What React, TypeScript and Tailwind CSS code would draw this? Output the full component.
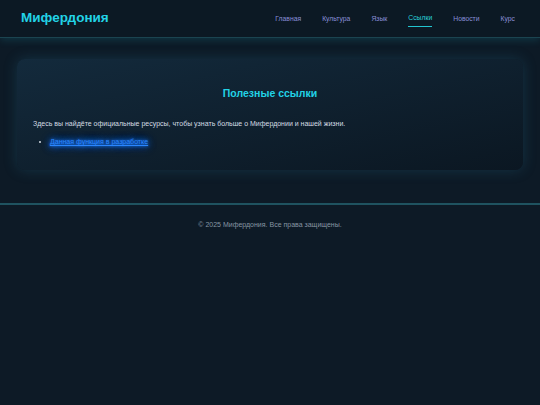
const navLinks = ["Главная", "Культура", "Язык", "Ссылки", "Новости", "Курс"];

export default function App() {
  return (
    <div
      className="min-h-[405px] bg-[#0d1a26] text-[#c9d4dc]"
      style={{ fontFamily: '"Liberation Sans", Arial, sans-serif' }}
    >
      {/* Header */}
      <header className="flex h-[38px] items-center justify-between border-b border-[#1b4450] bg-[#0c1924] pl-[21px] pr-[25px] shadow-[0_2px_8px_rgba(34,190,210,0.18)]">
        <h1 className="text-[13.5px] font-bold text-[#22d3e6]">Мифердония</h1>
        <nav className="flex items-center gap-[21px] text-[6.8px]">
          {navLinks.map((link) => (
            <span
              key={link}
              className={
                link === "Ссылки"
                  ? "border-b border-[#22c5d0] pb-[2px] pt-[3px] text-[#2ad0da]"
                  : "pb-[2px] pt-[3px] text-[#8a8fd8]"
              }
            >
              {link}
            </span>
          ))}
        </nav>
      </header>

      {/* Main card */}
      <main className="px-[17px] pt-[21px]">
        <section className="h-[111px] rounded-[8px] bg-gradient-to-br from-[#132a3c] to-[#0b1722] px-[16px] pt-[27px] shadow-[0_0_14px_rgba(40,120,150,0.28)]">
          <h2 className="text-center text-[10.5px] font-bold text-[#22d3e6]">Полезные ссылки</h2>
          <p className="mt-[17px] text-[7px] text-[#d4dde4]">
            Здесь вы найдёте официальные ресурсы, чтобы узнать больше о Мифердонии и нашей жизни.
          </p>
          <ul className="mt-[8px] list-disc pl-[17px] text-[7px]">
            <li className="marker:text-[#d4dde4]">
              <a className="text-[#2a86ff] underline [text-shadow:0_0_3px_#1a7cff,0_0_6px_#1a74ff,0_0_10px_#1060e0]">
                Данная функция в разработке
              </a>
            </li>
          </ul>
        </section>
      </main>

      {/* Footer */}
      <footer className="mt-[33px] border-t-2 border-[#1f5360] pt-[15px] text-center text-[7px] text-[#8695a2]">
        © 2025 Мифердония. Все права защищены.
      </footer>
    </div>
  );
}
